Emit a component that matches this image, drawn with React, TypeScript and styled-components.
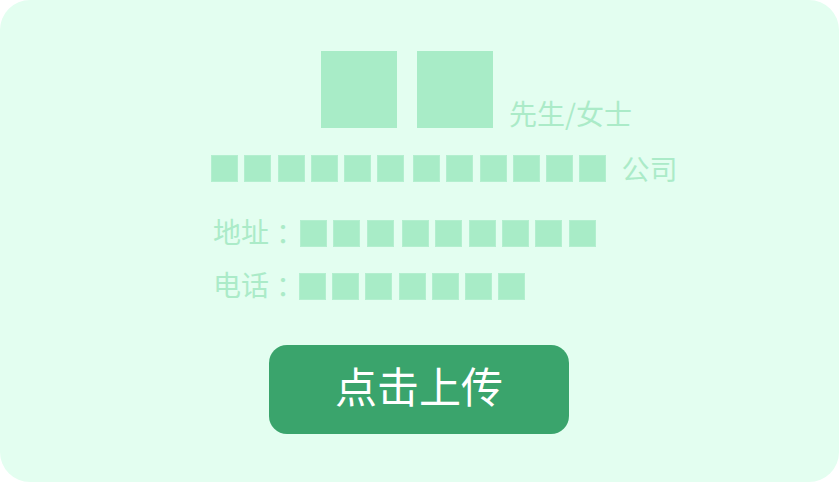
import React from "react";
import styled, { createGlobalStyle } from "styled-components";

const Global = createGlobalStyle`
  html, body { margin: 0; padding: 0; background: #ffffff; }
  body { font-family: "Noto Sans CJK SC", "Noto Sans", sans-serif; }
`;

const Card = styled.div`
  width: 839px;
  height: 482px;
  box-sizing: border-box;
  border-radius: 30px;
  background: #e3fef0;
  display: flex;
  flex-direction: column;
  padding-top: 51px;
  font-family: "Noto Sans CJK SC", "Noto Sans", sans-serif;
`;

const NameRow = styled.div`
  display: flex;
  align-items: flex-end;
  gap: 20px;
  margin-left: 321px;
`;

const BigBlock = styled.div`
  width: 76px;
  height: 77px;
  background: #a8ecc7;
`;

const Label = styled.span<{ $gap?: number; $shift?: number }>`
  font-size: 28px;
  line-height: 28px;
  color: #abebc8;
  white-space: nowrap;
  position: relative;
  top: ${(p) => p.$shift ?? 0}px;
  margin-left: ${(p) => p.$gap ?? 0}px;
`;

const Suffix = styled(Label)`
  margin-left: -4px;
`;

const Colon = styled.span`
  display: inline-block;
  width: 28px;
  text-align: center;
  font-family: "Noto Sans CJK TC", "Noto Sans CJK SC", sans-serif;
  position: relative;
  top: 2px;
`;

const Row = styled.div<{ $top: number; $left: number }>`
  display: flex;
  align-items: center;
  height: 27px;
  margin-top: ${(p) => p.$top}px;
  margin-left: ${(p) => p.$left}px;
`;

const Group = styled.div`
  display: flex;
  gap: 6.3px;
`;

const Blocks = styled.div<{ $start: number }>`
  display: flex;
  gap: 8.5px;
  margin-left: ${(p) => p.$start}px;
`;

const Block = styled.div`
  width: 27px;
  height: 27px;
  background: #a8ecc7;
  box-shadow: inset 0 0 0 1px #b3efcf;
`;

const ButtonWrap = styled.div`
  display: flex;
  justify-content: center;
  margin-top: 45px;
  padding-right: 1px;
`;

const UploadButton = styled.button`
  width: 300px;
  height: 89px;
  border: none;
  border-radius: 18px;
  background: #3aa46c;
  color: #ffffff;
  font-family: "Noto Sans CJK SC", "Noto Sans", sans-serif;
  font-size: 42px;
  line-height: 1;
  padding: 0 0 9px 0;
  cursor: pointer;
`;

const squares = (groups: number[]) => groups.map((n, gi) => (
  <Group key={gi}>
    {Array.from({ length: n }).map((_, i) => <Block key={i} />)}
  </Group>
));

export default function App() {
  return (
    <>
      <Global />
      <Card>
        <NameRow>
          <BigBlock />
          <BigBlock />
          <Suffix $shift={-1}>先生/女士</Suffix>
        </NameRow>
        <Row $top={27} $left={211}>
          <Blocks $start={0}>{squares([6, 6])}</Blocks>
          <Label $gap={15} $shift={-1}>公司</Label>
        </Row>
        <Row $top={38} $left={213}>
          <Label $shift={-3}>地址<Colon>：</Colon></Label>
          <Blocks $start={3}>{squares([3, 6])}</Blocks>
        </Row>
        <Row $top={26} $left={213}>
          <Label $shift={-3}>电话<Colon>：</Colon></Label>
          <Blocks $start={1.7}>{squares([7])}</Blocks>
        </Row>
        <ButtonWrap>
          <UploadButton>点击上传</UploadButton>
        </ButtonWrap>
      </Card>
    </>
  );
}
